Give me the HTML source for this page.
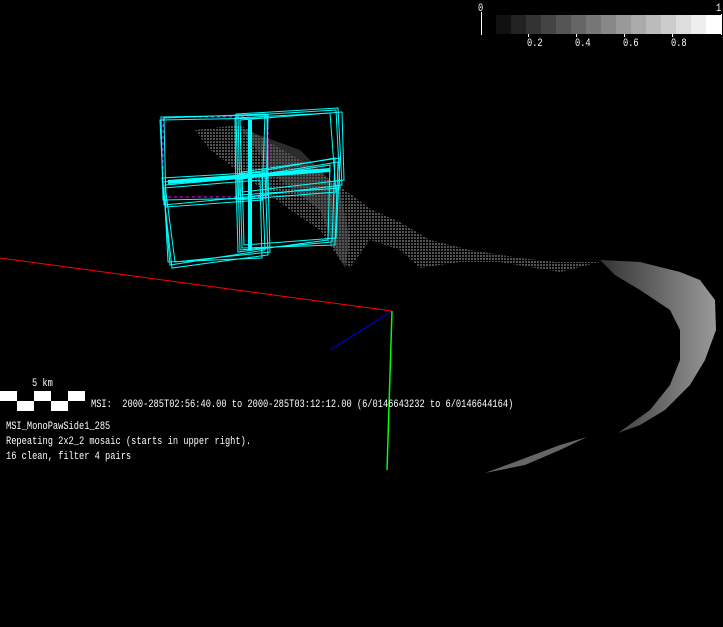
<!DOCTYPE html>
<html><head><meta charset="utf-8"><style>
html,body{margin:0;padding:0;background:#000;}
#c{position:relative;width:723px;height:627px;overflow:hidden;background:#000;}
.t{position:absolute;color:#fff;font-family:"Liberation Mono",monospace;font-size:8.7px;line-height:10px;white-space:pre;transform-origin:0 0;transform:scale(1,1.3);}
</style></head><body><div id="c">
<svg width="723" height="627" style="position:absolute;left:0;top:0">
<defs>
<linearGradient id="g1" x1="0" y1="0" x2="1" y2="1"><stop offset="0" stop-color="#777"/><stop offset="0.5" stop-color="#555"/><stop offset="1" stop-color="#444"/></linearGradient>
<linearGradient id="g2" x1="1" y1="0" x2="0" y2="0"><stop offset="0" stop-color="#999"/><stop offset="0.5" stop-color="#666"/><stop offset="1" stop-color="#333"/></linearGradient>
<pattern id="dots" width="3" height="3" patternUnits="userSpaceOnUse"><rect width="2" height="2" fill="#666"/></pattern>
</defs>
<path d="M195 130 L240 125 L300 160 L345 190 L372 210 L400 222 L430 240 L470 250 L520 258 L555 262 L600 262 L560 272 L500 262 L460 262 L420 268 L400 250 L370 240 L350 268 L340 260 L320 230 L290 210 L250 180 L210 150 Z" fill="url(#dots)" opacity="0.8"/>
<path d="M240 128 L300 150 L340 190 L350 240 L345 268 L335 250 L320 210 L280 180 Z" fill="#555" opacity="0.5"/>
<path d="M600 260 L640 262 L680 272 L700 280 L715 300 L716 330 L705 360 L690 385 L665 410 L640 425 L618 433 L650 410 L670 385 L680 360 L680 330 L670 310 L640 290 L615 275 Z" fill="url(#g2)"/>
<path d="M485 473 L520 460 L560 445 L587 437 L560 450 L525 465 Z" fill="#666"/>
<line x1="0" y1="258" x2="392" y2="311" stroke="#f00" stroke-width="1"/>
<line x1="392" y1="311" x2="330" y2="350" stroke="#00f" stroke-width="1"/>
<line x1="392" y1="311" x2="387" y2="470" stroke="#0f0" stroke-width="1.5"/>
<g fill="none" stroke="#0ff" stroke-width="1">
<rect x="163" y="117" width="105" height="80" stroke="#f0f" stroke-dasharray="3,3"/>
<polygon points="161,117 268,115 266,198 163,200"/>
<polygon points="160,120 267,118 268,195 164,205"/>
<polygon points="164,118 265,114 262,200 166,207"/>
<polygon points="236,114 338,108 342,185 238,198"/>
<polygon points="238,116 336,110 340,188 240,195"/>
<polygon points="240,120 342,112 344,180 242,192"/>
<polygon points="235,118 330,113 336,192 236,200"/>
<polygon points="162,178 265,172 268,255 172,268"/>
<polygon points="163,182 262,174 265,250 170,265"/>
<polygon points="165,185 268,176 270,252 175,262"/>
<polygon points="164,188 260,180 262,258 168,262"/>
<polygon points="238,175 335,158 332,242 240,250"/>
<polygon points="240,178 338,162 335,245 242,248"/>
<polygon points="236,180 330,165 328,240 238,252"/>
<polygon points="242,172 340,158 336,238 244,245"/>
</g>
<g stroke="#0ff" stroke-width="4"><line x1="250" y1="120" x2="250" y2="250"/><line x1="168" y1="182" x2="330" y2="170"/></g>
<g>
<rect x="496" y="15" width="15" height="19" fill="#111"/>
<rect x="511" y="15" width="15" height="19" fill="#222"/>
<rect x="526" y="15" width="15" height="19" fill="#333"/>
<rect x="541" y="15" width="15" height="19" fill="#444"/>
<rect x="556" y="15" width="15" height="19" fill="#555"/>
<rect x="571" y="15" width="15" height="19" fill="#666"/>
<rect x="586" y="15" width="15" height="19" fill="#777"/>
<rect x="601" y="15" width="15" height="19" fill="#888"/>
<rect x="616" y="15" width="15" height="19" fill="#999"/>
<rect x="631" y="15" width="15" height="19" fill="#aaa"/>
<rect x="646" y="15" width="15" height="19" fill="#bbb"/>
<rect x="661" y="15" width="15" height="19" fill="#ccc"/>
<rect x="676" y="15" width="15" height="19" fill="#ddd"/>
<rect x="691" y="15" width="15" height="19" fill="#eee"/>
<rect x="706" y="15" width="16" height="19" fill="#fff"/>
<g stroke="#fff" stroke-width="1"><line x1="481.5" y1="12" x2="481.5" y2="35"/><line x1="528.5" y1="34" x2="528.5" y2="37"/><line x1="576.5" y1="34" x2="576.5" y2="37"/><line x1="624.5" y1="34" x2="624.5" y2="37"/><line x1="672.5" y1="34" x2="672.5" y2="37"/><line x1="721.5" y1="14" x2="721.5" y2="35"/></g>
</g>
<rect x="0" y="391" width="85" height="20" fill="#fff"/>
<rect x="17" y="391" width="17" height="10" fill="#000"/><rect x="51" y="391" width="17" height="10" fill="#000"/>
<rect x="0" y="401" width="17" height="10" fill="#000"/><rect x="34" y="401" width="17" height="10" fill="#000"/><rect x="68" y="401" width="17" height="10" fill="#000"/>
</svg>
<div class="t" style="left:478px;top:2px">0</div>
<div class="t" style="left:716px;top:2px">1</div>
<div class="t" style="left:527px;top:37px">0.2</div>
<div class="t" style="left:575px;top:37px">0.4</div>
<div class="t" style="left:623px;top:37px">0.6</div>
<div class="t" style="left:671px;top:37px">0.8</div>
<div class="t" style="left:32px;top:377px">5 km</div>
<div class="t" style="left:91px;top:398px">MSI:  2000-285T02:56:40.00 to 2000-285T03:12:12.00 (6/0146643232 to 6/0146644164)</div>
<div class="t" style="left:6px;top:420px">MSI_MonoPawSide1_285</div>
<div class="t" style="left:6px;top:435px">Repeating 2x2_2 mosaic (starts in upper right).</div>
<div class="t" style="left:6px;top:450px">16 clean, filter 4 pairs</div>
</div></body></html>
